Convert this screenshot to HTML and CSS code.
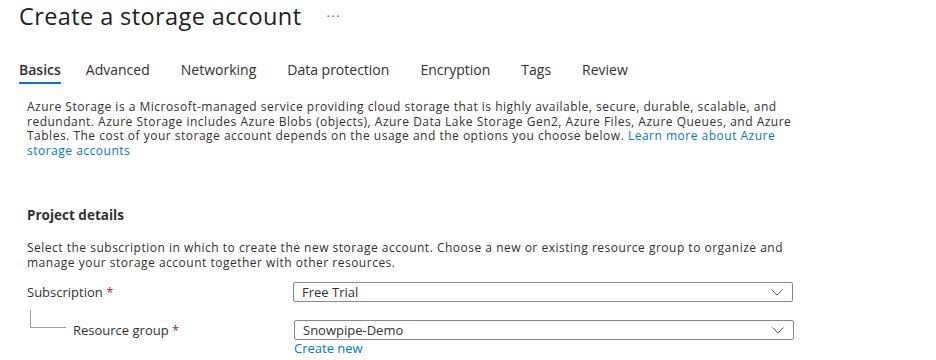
FILE: index.html
```html
<!DOCTYPE html>
<html lang="en">
<head>
    <meta charset="UTF-8">
    <title>Create a storage account</title>
    <link rel="stylesheet" href="styles.css">
</head>
<body>
    <div class="page">
        <div class="header">
            <h1 class="title">Create a storage account</h1>
            <span class="more">&middot;&middot;&middot;</span>
        </div>

        <div class="tabs">
            <span class="tab active">Basics</span>
            <span class="tab">Advanced</span>
            <span class="tab">Networking</span>
            <span class="tab">Data protection</span>
            <span class="tab">Encryption</span>
            <span class="tab">Tags</span>
            <span class="tab">Review</span>
        </div>

        <div class="content">
            <p class="intro">Azure Storage is a Microsoft-managed service providing cloud storage that is highly available, secure, durable, scalable, and redundant. Azure Storage includes Azure Blobs (objects), Azure Data Lake Storage Gen2, Azure Files, Azure Queues, and Azure Tables. The cost of your storage account depends on the usage and the options you choose below. <a href="#">Learn more about Azure storage accounts</a></p>

            <h2 class="section">Project details</h2>

            <p class="desc">Select the subscription in which to create the new storage account. Choose a new or existing resource group to organize and manage your storage account together with other resources.</p>

            <div class="field">
                <label class="label">Subscription <span class="req">*</span></label>
                <div class="select">
                    <span>Free Trial</span>
                    <svg width="12" height="7" viewBox="0 0 12 7"><path d="M0.5 0.5 L6 6 L11.5 0.5" fill="none" stroke="#605e5c" stroke-width="1"/></svg>
                </div>
            </div>

            <div class="field child">
                <div class="tree"></div>
                <label class="label">Resource group <span class="req">*</span></label>
                <div class="control">
                    <div class="select">
                        <span>Snowpipe-Demo</span>
                        <svg width="12" height="7" viewBox="0 0 12 7"><path d="M0.5 0.5 L6 6 L11.5 0.5" fill="none" stroke="#605e5c" stroke-width="1"/></svg>
                    </div>
                    <a href="#" class="create">Create new</a>
                </div>
            </div>
        </div>
    </div>
</body>
</html>
```

FILE: styles.css
```css
body {
    margin: 0;
    padding: 0;
    background: #fff;
    font-family: "Open Sans", "Noto Sans", sans-serif;
    color: #323130;
}

.page {
    padding: 0 0 0 19px;
}

.header {
    display: flex;
    align-items: center;
    height: 32px;
}

.title {
    margin: 0;
    font-size: 23.5px;
    font-weight: 500;
    letter-spacing: 0.4px;
    color: #201f1e;
}

.more {
    margin-left: 25px;
    font-size: 13px;
    color: #605e5c;
    letter-spacing: 1.5px;
}

.tabs {
    display: flex;
    margin-top: 28px;
}

.tab {
    font-size: 14px;
    line-height: 20px;
    padding-bottom: 4px;
    margin-right: 31px;
    color: #323130;
}

.tab.active {
    font-weight: 600;
    padding-bottom: 2px;
    border-bottom: 2px solid #0078d4;
    margin-right: 25px;
}

.content {
    padding-left: 8px;
    width: 880px;
}

/* text in the reference is wide and short, so small size + tracking */
.intro,
.desc {
    margin: 0;
    max-width: 770px;
    font-size: 12px;
    letter-spacing: 0.5px;
    line-height: 14.7px;
}

.intro {
    margin-top: 16px;
}

a {
    color: #0078d4;
    text-decoration: none;
}

.section {
    font-size: 13.5px;
    font-weight: 700;
    line-height: 20px;
    margin: 46px 0 0 0;
}

.desc {
    margin-top: 16px;
}

.field {
    display: flex;
    align-items: flex-start;
    margin-top: 12px;
}

.field.child {
    position: relative;
    margin-top: 18px;
}

.label {
    width: 266px;
    font-size: 13px;
    line-height: 20px;
}

.req {
    color: #a4262c;
}

.field.child .label {
    width: 221px;
    padding-left: 46px;
}

.tree {
    position: absolute;
    left: 3px;
    top: -10px;
    width: 35px;
    height: 17px;
    border-left: 1px solid #a19f9d;
    border-bottom: 1px solid #a19f9d;
}

.select {
    width: 500px;
    height: 20px;
    box-sizing: border-box;
    border: 1px solid #8a8886;
    border-radius: 2px;
    display: flex;
    align-items: center;
    justify-content: space-between;
    padding: 0 9px 0 8px;
    font-size: 13px;
}

.create {
    display: block;
    font-size: 13px;
    line-height: 16px;
}
```
